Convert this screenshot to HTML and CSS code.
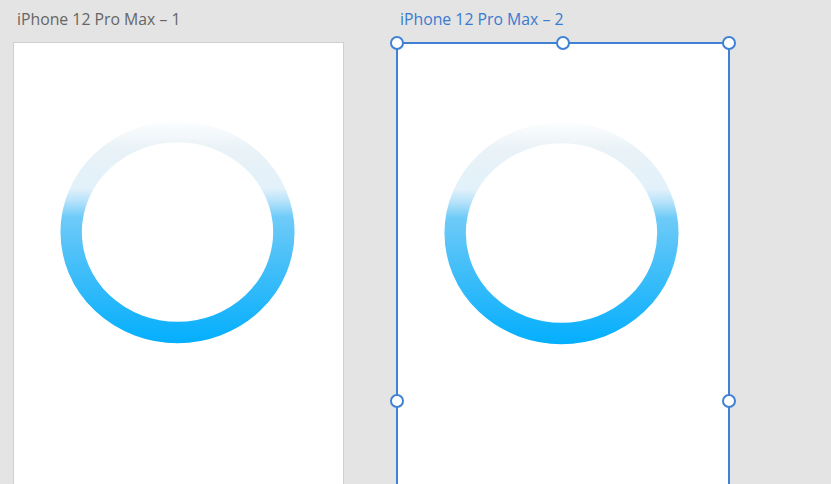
FILE: index.html
```html
<!DOCTYPE html>
<html lang="en">
<head>
<meta charset="UTF-8" />
<meta name="viewport" content="width=device-width, initial-scale=1" />
<title>Artboards</title>
<link rel="stylesheet" href="styles.css">
</head>
<body>
<div class="canvas">

  <div class="board">
    <div class="board-title">iPhone 12 Pro Max – 1</div>
    <div class="artboard">
      <svg class="ring" viewBox="0 0 331 400">
        <defs>
          <linearGradient id="ringFade1" gradientUnits="userSpaceOnUse" x1="0" y1="80" x2="0" y2="300">
            <stop offset="0" stop-color="#fbfdfe" />
            <stop offset="0.12" stop-color="#e9f2f7" />
            <stop offset="0.3" stop-color="#e2f1fa" />
            <stop offset="0.36" stop-color="#b5e2fa" />
            <stop offset="0.43" stop-color="#6fcbf8" />
            <stop offset="0.6" stop-color="#4ec1f8" />
            <stop offset="1" stop-color="#05affd" />
          </linearGradient>
        </defs>
        <ellipse cx="164.5" cy="190" rx="107" ry="101" fill="none" stroke="url(#ringFade1)" stroke-width="21.5" />
      </svg>
    </div>
  </div>

  <div class="board selected">
    <div class="board-title">iPhone 12 Pro Max – 2</div>
    <div class="artboard">
      <svg class="ring" viewBox="0 0 331 400">
        <defs>
          <linearGradient id="ringFade2" gradientUnits="userSpaceOnUse" x1="0" y1="80" x2="0" y2="300">
            <stop offset="0" stop-color="#fbfdfe" />
            <stop offset="0.12" stop-color="#e9f2f7" />
            <stop offset="0.3" stop-color="#e2f1fa" />
            <stop offset="0.36" stop-color="#b5e2fa" />
            <stop offset="0.43" stop-color="#6fcbf8" />
            <stop offset="0.6" stop-color="#4ec1f8" />
            <stop offset="1" stop-color="#05affd" />
          </linearGradient>
        </defs>
        <ellipse cx="164.5" cy="190" rx="107" ry="101" fill="none" stroke="url(#ringFade2)" stroke-width="21.5" />
      </svg>
      <span class="handle h-tl"></span>
      <span class="handle h-tm"></span>
      <span class="handle h-tr"></span>
      <span class="handle h-ml"></span>
      <span class="handle h-mr"></span>
    </div>
  </div>

</div>
</body>
</html>
```

FILE: styles.css
```css
html, body { margin: 0; padding: 0; height: 100%; overflow: hidden; }
body { background: #e4e4e4; font-family: "Segoe UI", "Open Sans", "Noto Sans", sans-serif; }

.canvas { display: flex; gap: 52px; padding-left: 13px; }

.board-title { height: 42px; box-sizing: border-box; padding: 8px 0 0 4px; font-size: 15.8px; line-height: 22px; color: #666; white-space: nowrap; }
.artboard { position: relative; width: 331px; height: 716px; box-sizing: border-box; background: #fff; border: 1px solid #cfcfcf; }
.ring { display: block; width: 329px; height: 398px; }

.board.selected .board-title { color: #3a7bd0; }
.board.selected .artboard { width: 334px; border: 2px solid #3f81d4; }

.handle { position: absolute; width: 10px; height: 10px; border: 2px solid #3f81d4; border-radius: 50%; background: #fff; }
.h-tl { left: -8px; top: -8px; }
.h-tm { left: 158px; top: -8px; }
.h-tr { right: -8px; top: -8px; }
.h-ml { left: -8px; top: 350px; }
.h-mr { right: -8px; top: 350px; }
```
